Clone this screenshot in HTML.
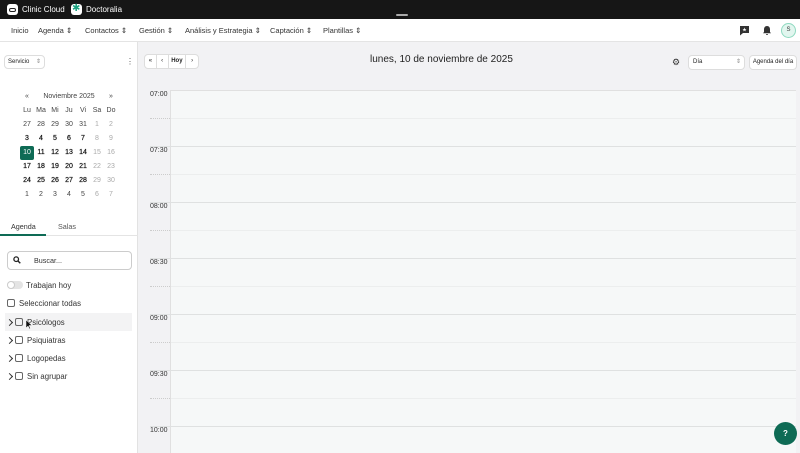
<!DOCTYPE html>
<html><head><meta charset="utf-8"><style>
*{box-sizing:border-box;margin:0;padding:0}
body{width:800px;height:453px;overflow:hidden;font-family:"Liberation Sans",sans-serif;background:#f2f2f4;position:relative;color:#222}
.a{position:absolute}
.top{left:0;top:0;width:800px;height:19px;background:#161616;color:#fff;font-size:8px}
.nav{left:0;top:19px;width:800px;height:23px;background:#fff;border-bottom:1px solid #e4e4e4;font-size:7.5px;color:#333}
.nav span{position:absolute;top:7px}
.side{left:0;top:42px;width:138px;height:411px;background:#fff;border-right:1px solid #e2e2e2}
.cal{font-size:7px;text-align:center;color:#444}
.cal div{position:absolute;width:14px;height:14px;line-height:14px}
.b{color:#111;-webkit-text-stroke:0.2px #111}
.g{color:#aaa}
.btn{background:#fff;border:1px solid #ddd;border-radius:4px;font-size:6.5px}
.row{font-size:7.8px;color:#333}
.cb{position:absolute;width:8px;height:8px;border:1px solid #666;border-radius:2px}
.grid{left:170px;top:90px;width:626px;height:363px;background:#f6f8f8;border-left:1px solid #e0e0e0;border-top:1px solid #e0e0e0}
.hl{position:absolute;height:1px;background:#dfe1e1}
.ql{position:absolute;height:1px;background:#eceeee}
.qd{position:absolute;left:150px;width:20px;height:1px;border-top:1px dotted #ccc}
.lbl{position:absolute;left:150px;font-size:7px;color:#333}
.chev{position:absolute;left:7px;width:5px;height:5px;border-right:1.2px solid #333;border-top:1.2px solid #333;transform:rotate(45deg)}
</style></head><body>
<div class="a top">
 <div class="a" style="left:7px;top:4px;width:11px;height:11px;border-radius:3px;background:#fff"></div>
 <div class="a" style="left:9px;top:8px;width:7px;height:4px;border:1px solid #222;border-radius:3px"></div>
 <span class="a" style="left:22px;top:5px">Clinic Cloud</span>
 <div class="a" style="left:71px;top:4px;width:11px;height:11px;border-radius:3px;background:#fff"></div>
 <span class="a" style="left:72px;top:3px;color:#1aa17f;font-size:10px">✱</span>
 <span class="a" style="left:86px;top:5px">Doctoralia</span>
 <div class="a" style="left:396px;top:14px;width:12px;height:2px;background:#aaa;border-radius:1px"></div>
</div>
<div class="a nav">
 <span style="left:11px">Inicio</span><span style="left:38px">Agenda ⇕</span><span style="left:85px">Contactos ⇕</span><span style="left:139px">Gestión ⇕</span><span style="left:185px">Análisis y Estrategia ⇕</span><span style="left:270px">Captación ⇕</span><span style="left:323px">Plantillas ⇕</span>
 <svg class="a" style="left:739px;top:6px" width="11" height="11" viewBox="0 0 11 11"><path d="M1 1h9v7H4l-3 2.5z" fill="#333"/><path d="M5.5 2.5l.5 1.5h1.5l-1.2.9.5 1.5-1.3-.9-1.3.9.5-1.5L3.5 4H5z" fill="#fff"/></svg>
 <svg class="a" style="left:762px;top:6px" width="10" height="11" viewBox="0 0 10 11"><path d="M5 1c2 0 3 1.5 3 3.5v2.5l1 1.2H1L2 7V4.5C2 2.5 3 1 5 1z M4 9h2a1 1 0 0 1-2 0z" fill="#333"/></svg>
 <div class="a" style="left:781px;top:4px;width:15px;height:15px;border-radius:50%;background:#e2f6ef;border:1px solid #8fd9c0;font-size:6px;text-align:center;line-height:13px;color:#333">S</div>
</div>
<div class="a side">
 <div class="a btn" style="left:4px;top:13px;width:41px;height:14px;line-height:12px;padding-left:3px;font-size:6px">Servicio <span style="float:right;margin-right:3px;color:#888">⇕</span></div>
 <span class="a" style="left:126px;top:15px;font-size:8px;color:#555">⋮</span>
</div>
<div class="a cal" style="left:0;top:2px">
 <div style="left:20px;top:88px">«</div><div style="left:36px;top:88px;width:66px">Noviembre 2025</div><div style="left:104px;top:88px">»</div>
 <div style="left:20px;top:102px">Lu</div><div style="left:34px;top:102px">Ma</div><div style="left:48px;top:102px">Mi</div><div style="left:62px;top:102px">Ju</div><div style="left:76px;top:102px">Vi</div><div style="left:90px;top:102px">Sa</div><div style="left:104px;top:102px">Do</div>
 <div style="left:20px;top:116px">27</div><div style="left:34px;top:116px">28</div><div style="left:48px;top:116px">29</div><div style="left:62px;top:116px">30</div><div style="left:76px;top:116px">31</div><div class="g" style="left:90px;top:116px">1</div><div class="g" style="left:104px;top:116px">2</div>
 <div class="b" style="left:20px;top:130px">3</div><div class="b" style="left:34px;top:130px">4</div><div class="b" style="left:48px;top:130px">5</div><div class="b" style="left:62px;top:130px">6</div><div class="b" style="left:76px;top:130px">7</div><div class="g" style="left:90px;top:130px">8</div><div class="g" style="left:104px;top:130px">9</div>
 <div style="left:20px;top:144px;background:#0e6b55;color:#fff;border-radius:2px">10</div><div class="b" style="left:34px;top:144px">11</div><div class="b" style="left:48px;top:144px">12</div><div class="b" style="left:62px;top:144px">13</div><div class="b" style="left:76px;top:144px">14</div><div class="g" style="left:90px;top:144px">15</div><div class="g" style="left:104px;top:144px">16</div>
 <div class="b" style="left:20px;top:158px">17</div><div class="b" style="left:34px;top:158px">18</div><div class="b" style="left:48px;top:158px">19</div><div class="b" style="left:62px;top:158px">20</div><div class="b" style="left:76px;top:158px">21</div><div class="g" style="left:90px;top:158px">22</div><div class="g" style="left:104px;top:158px">23</div>
 <div class="b" style="left:20px;top:172px">24</div><div class="b" style="left:34px;top:172px">25</div><div class="b" style="left:48px;top:172px">26</div><div class="b" style="left:62px;top:172px">27</div><div class="b" style="left:76px;top:172px">28</div><div class="g" style="left:90px;top:172px">29</div><div class="g" style="left:104px;top:172px">30</div>
 <div style="left:20px;top:186px">1</div><div style="left:34px;top:186px">2</div><div style="left:48px;top:186px">3</div><div style="left:62px;top:186px">4</div><div style="left:76px;top:186px">5</div><div class="g" style="left:90px;top:186px">6</div><div class="g" style="left:104px;top:186px">7</div>
</div>
<div class="a" style="left:0;top:235px;width:138px;height:1px;background:#e4e4e4"></div>
<div class="a" style="left:0;top:234px;width:46px;height:2px;background:#0e6b55"></div>
<span class="a row" style="left:11px;top:222px;font-size:7.2px">Agenda</span>
<span class="a row" style="left:58px;top:222px;font-size:7.2px;color:#555">Salas</span>
<div class="a" style="left:7px;top:251px;width:125px;height:19px;border:1px solid #ccc;border-radius:4px;background:#fff"></div>
<svg class="a" style="left:13px;top:256px" width="8" height="8" viewBox="0 0 8 8"><circle cx="3.2" cy="3.2" r="2.3" fill="none" stroke="#222" stroke-width="1.3"/><path d="M5 5l2.3 2.3" stroke="#222" stroke-width="1.4"/></svg>
<span class="a row" style="left:34px;top:256px;font-size:7.2px">Buscar...</span>
<div class="a" style="left:7px;top:281px;width:16px;height:8px;border-radius:4px;background:#e4e4e4"></div>
<div class="a" style="left:7px;top:281px;width:8px;height:8px;border-radius:50%;background:#fff;border:1px solid #ccc"></div>
<span class="a row" style="left:26px;top:281px">Trabajan hoy</span>
<div class="cb" style="left:7px;top:299px"></div><span class="a row" style="left:19px;top:299px">Seleccionar todas</span>
<div class="a" style="left:5px;top:313px;width:127px;height:18px;background:#f3f3f4"></div>
<div class="chev" style="top:320px"></div><div class="cb" style="left:15px;top:318px"></div><span class="a row" style="left:27px;top:318px">Psicólogos</span>
<div class="chev" style="top:338px"></div><div class="cb" style="left:15px;top:336px"></div><span class="a row" style="left:27px;top:336px">Psiquiatras</span>
<div class="chev" style="top:356px"></div><div class="cb" style="left:15px;top:354px"></div><span class="a row" style="left:27px;top:354px">Logopedas</span>
<div class="chev" style="top:374px"></div><div class="cb" style="left:15px;top:372px"></div><span class="a row" style="left:27px;top:372px">Sin agrupar</span>
<svg class="a" style="left:26px;top:320px" width="6" height="9" viewBox="0 0 6 9"><path d="M0 0v8l2-2 1.5 3 1-.5L3 5.5h3z" fill="#111" stroke="#fff" stroke-width=".5"/></svg>

<div class="a btn" style="left:144px;top:54px;width:55px;height:15px;display:flex;font-size:6px;line-height:13px;text-align:center">
 <span style="width:12px;border-right:1px solid #ddd">«</span><span style="width:12px;border-right:1px solid #ddd">‹</span><span style="width:18px;border-right:1px solid #ddd;font-weight:bold">Hoy</span><span style="width:12px">›</span></div>
<span class="a" style="left:370px;top:54px;font-size:10px;color:#222">lunes, 10 de noviembre de 2025</span>
<span class="a" style="left:672px;top:57px;font-size:9px;color:#333">⚙</span>
<div class="a btn" style="left:688px;top:55px;width:57px;height:15px;line-height:13px;padding-left:4px;font-size:6px">Día<span style="float:right;margin-right:3px;color:#888">⇕</span></div>
<div class="a btn" style="left:749px;top:55px;width:48px;height:15px;line-height:13px;text-align:center;font-size:6px">Agenda del día</div>

<div class="a grid"></div>
<div class="hl" style="left:150px;top:146px;width:646px"></div>
<div class="hl" style="left:150px;top:202px;width:646px"></div>
<div class="hl" style="left:150px;top:258px;width:646px"></div>
<div class="hl" style="left:150px;top:314px;width:646px"></div>
<div class="hl" style="left:150px;top:370px;width:646px"></div>
<div class="hl" style="left:150px;top:426px;width:646px"></div>
<div class="ql" style="left:171px;top:118px;width:625px"></div>
<div class="ql" style="left:171px;top:174px;width:625px"></div>
<div class="ql" style="left:171px;top:230px;width:625px"></div>
<div class="ql" style="left:171px;top:286px;width:625px"></div>
<div class="ql" style="left:171px;top:342px;width:625px"></div>
<div class="ql" style="left:171px;top:398px;width:625px"></div>
<div class="qd" style="top:118px"></div><div class="qd" style="top:174px"></div><div class="qd" style="top:230px"></div><div class="qd" style="top:286px"></div><div class="qd" style="top:342px"></div><div class="qd" style="top:398px"></div>
<span class="lbl" style="top:91px">07:00</span>
<span class="lbl" style="top:147px">07:30</span>
<span class="lbl" style="top:203px">08:00</span>
<span class="lbl" style="top:259px">08:30</span>
<span class="lbl" style="top:315px">09:00</span>
<span class="lbl" style="top:371px">09:30</span>
<span class="lbl" style="top:427px">10:00</span>
<div class="a" style="left:774px;top:422px;width:23px;height:23px;border-radius:50%;background:#0e6b55;color:#fff;font-size:8px;font-weight:bold;text-align:center;line-height:23px">?</div>
</body></html>
